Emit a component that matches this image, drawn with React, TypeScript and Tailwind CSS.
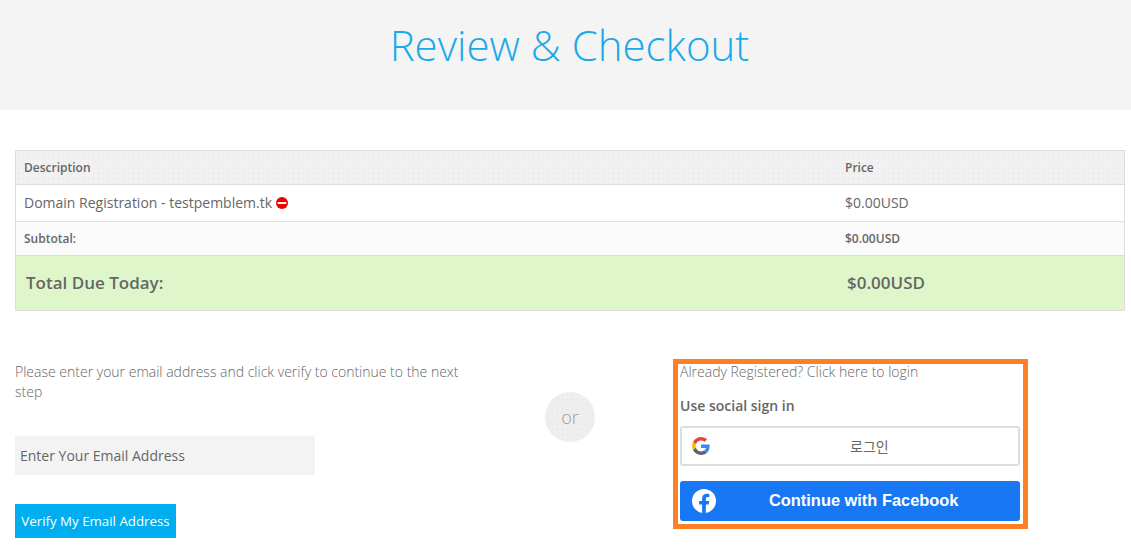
import { Minus } from "lucide-react";

const dots = "bg-[radial-gradient(#e3e3e3_0.6px,transparent_0.9px)] bg-[length:5px_5px]";

function GoogleIcon() {
  return (
    <svg viewBox="0 0 48 48" className="w-[18px] h-[18px]">
      <path fill="#EA4335" d="M24 9.5c3.54 0 6.71 1.22 9.21 3.6l6.85-6.85C35.9 2.38 30.47 0 24 0 14.62 0 6.51 5.38 2.56 13.22l7.98 6.19C12.43 13.72 17.74 9.5 24 9.5z" />
      <path fill="#4285F4" d="M46.98 24.55c0-1.57-.15-3.09-.38-4.55H24v9.02h12.94c-.58 2.96-2.26 5.48-4.78 7.18l7.73 6c4.51-4.18 7.09-10.36 7.09-17.65z" />
      <path fill="#FBBC05" d="M10.53 28.59c-.48-1.45-.76-2.99-.76-4.59s.27-3.14.76-4.59l-7.98-6.19C.92 16.46 0 20.12 0 24c0 3.88.92 7.54 2.56 10.78l7.97-6.19z" />
      <path fill="#5f6368" d="M24 48c6.48 0 11.93-2.13 15.89-5.81l-7.73-6c-2.15 1.45-4.92 2.3-8.16 2.3-6.26 0-11.57-4.22-13.47-9.91l-7.98 6.19C6.51 42.62 14.62 48 24 48z" />
    </svg>
  );
}

function FacebookIcon() {
  return (
    <svg viewBox="0 0 24 24" className="w-6 h-6">
      <circle cx="12" cy="12" r="12" fill="#fff" />
      <path fill="#1877f2" d="M16.67 15.47 17.2 12h-3.33V9.75c0-.95.47-1.87 1.96-1.87h1.51V4.92s-1.37-.23-2.69-.23c-2.74 0-4.53 1.66-4.53 4.67V12H7.08v3.47h3.04v8.39a12.1 12.1 0 0 0 3.75 0v-8.39h2.8z" />
    </svg>
  );
}

export default function App() {
  return (
    <div className="w-[1131px] h-[545px] overflow-hidden bg-white text-[#666] font-['Open_Sans',sans-serif]">
      <div className="h-[110px] bg-[#f4f4f4] flex items-center justify-center pb-[22px] pl-2">
        <h1 className="text-[42px] font-light text-[#1ba9e8]">Review &amp; Checkout</h1>
      </div>

      <div className="px-[15px]">
        {/* cart table */}
        <div className="mt-10 w-[1110px] border border-[#dddddd]">
          <div className={`h-[34px] flex items-center bg-[#f1f1f1] ${dots} border-b border-[#dddddd] text-xs font-semibold`}>
            <div className="w-[829px] pl-2">Description</div>
            <div>Price</div>
          </div>
          <div className="h-[37px] flex items-center border-b border-[#e0e0e0] text-sm">
            <div className="w-[829px] pl-2 flex items-center gap-1">
              Domain Registration - testpemblem.tk
              <span className="w-3 h-3 rounded-full bg-[#f00000] flex items-center justify-center">
                <Minus size={12} strokeWidth={4} className="text-white" />
              </span>
            </div>
            <div>$0.00USD</div>
          </div>
          <div className="h-[34px] flex items-center bg-[#fafafa] border-b border-[#dddddd] text-xs font-semibold">
            <div className="w-[829px] pl-2">Subtotal:</div>
            <div>$0.00USD</div>
          </div>
          <div className="h-[54px] flex items-center bg-[#dff6ca] text-[17px] font-semibold">
            <div className="w-[831px] pl-[10px]">Total Due Today:</div>
            <div>$0.00USD</div>
          </div>
        </div>

        <div className="mt-[48px] flex items-start">
          {/* email form */}
          <div className="w-[530px] pt-[3px] font-light">
            <p className="w-[460px] text-sm leading-5">
              Please enter your email address and click verify to continue to the next step
            </p>
            <div className="mt-[34px] w-[300px] h-[39px] bg-[#f3f3f3] flex items-center pl-[5px] text-sm font-normal">
              Enter Your Email Address
            </div>
            <button className="mt-[29px] w-[161px] h-[34px] pt-px bg-[#00aeef] text-white text-[13.3px] font-normal flex items-center justify-center">
              Verify My Email Address
            </button>
          </div>

          <div className={`mt-[33px] w-[50px] h-[50px] rounded-full bg-[#eeeeee] ${dots} flex items-center justify-center text-lg font-light text-[#999]`}>
            or
          </div>

          {/* social login */}
          <div className="ml-[78px] w-[355px] h-[170px] border-[5px] border-[#ff7f27] px-[2px]">
            <p className="pt-px text-sm font-light leading-[14px]">Already Registered? Click here to login</p>
            <p className="mt-[17px] text-sm font-semibold leading-[19px]">Use social sign in</p>
            <div className="mt-[11px] w-[340px] h-[40px] border-2 border-[#dddddd] rounded-[3px] flex items-center relative">
              <span className="ml-[10px]"><GoogleIcon /></span>
              <span className="absolute left-[168px] text-sm font-['Noto_Sans_CJK_KR',sans-serif]">로그인</span>
            </div>
            <div className="mt-[15px] w-[340px] h-10 pb-[2px] bg-[#1877f2] rounded-[3px] flex items-center relative">
              <span className="ml-3 mt-[2px]"><FacebookIcon /></span>
              <span className="absolute left-[89px] text-white text-[16.4px] font-bold font-['Liberation_Sans',sans-serif]">Continue with Facebook</span>
            </div>
          </div>
        </div>
      </div>
    </div>
  );
}
